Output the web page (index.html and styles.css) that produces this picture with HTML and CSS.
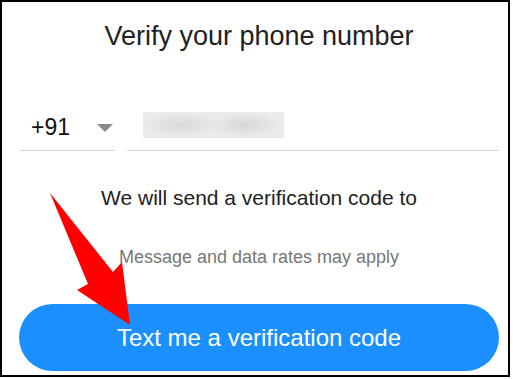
FILE: index.html
```html
<!DOCTYPE html>
<html>
<head>
<meta charset="utf-8">
<link rel="stylesheet" href="styles.css">
</head>
<body>
<div class="frame">
  <h1 class="title">Verify your phone number</h1>
  <div class="phone-row">
    <div class="country">
      <span class="code">+91</span>
      <span class="caret"></span>
    </div>
    <div class="number">
      <div class="blurred"></div>
    </div>
  </div>
  <p class="send">We will send a verification code to</p>
  <p class="rates">Message and data rates may apply</p>
  <button class="cta">Text me a verification code</button>
  <svg class="arrow" width="510" height="377" viewBox="0 0 510 377">
    <polygon points="50,193 113,272 122,262 130,325 77,290 88,284" fill="#ff0000"/>
  </svg>
</div>
</body>
</html>
```
FILE: styles.css
```css
html, body {
  margin: 0;
  padding: 0;
  background: #ffffff;
}
body {
  font-family: "Liberation Sans", Arial, sans-serif;
}
.frame {
  position: relative;
  box-sizing: border-box;
  width: 510px;
  height: 377px;
  border: 2px solid #000;
  padding: 18px 9px 0 17px;
  display: flex;
  flex-direction: column;
  align-items: stretch;
  overflow: hidden;
}
.title {
  margin: 0;
  font-size: 27px;
  line-height: 32px;
  font-weight: normal;
  color: #222;
  text-align: center;
}
.phone-row {
  margin-top: 58px;
  display: flex;
  gap: 12px;
  height: 41px;
}
.country {
  box-sizing: border-box;
  width: 96px;
  border-bottom: 1px solid #d4d4d4;
  display: flex;
  align-items: flex-start;
  padding: 4px 0 0 12px;
}
.code {
  font-size: 23px;
  line-height: 26px;
  color: #111;
}
.caret {
  margin: 10px 0 0 27px;
  width: 0;
  height: 0;
  border-left: 8px solid transparent;
  border-right: 8px solid transparent;
  border-top: 8px solid #8a8a8a;
}
.number {
  box-sizing: border-box;
  flex: 1;
  border-bottom: 1px solid #d4d4d4;
  padding: 2px 0 0 16px;
}
.blurred {
  width: 141px;
  height: 26px;
  background:
    radial-gradient(ellipse 40px 12px at 38px 13px, #d8d8d8, rgba(216,216,216,0)),
    radial-gradient(ellipse 36px 12px at 102px 13px, #d6d6d6, rgba(214,214,214,0)),
    #ebebeb;
}
.send {
  margin: 35px 0 0;
  font-size: 21px;
  line-height: 24px;
  color: #222;
  text-align: center;
}
.rates {
  margin: 36px 0 0;
  font-size: 18px;
  line-height: 22px;
  color: #777;
  text-align: center;
}
.cta {
  margin-top: 36px;
  height: 67px;
  border: none;
  border-radius: 34px;
  background: #1b8ffd;
  color: #fff;
  font-family: "Liberation Sans", Arial, sans-serif;
  font-size: 24px;
  line-height: 27px;
  padding: 0;
}
.arrow {
  position: absolute;
  left: -2px;
  top: -2px;
}
```
